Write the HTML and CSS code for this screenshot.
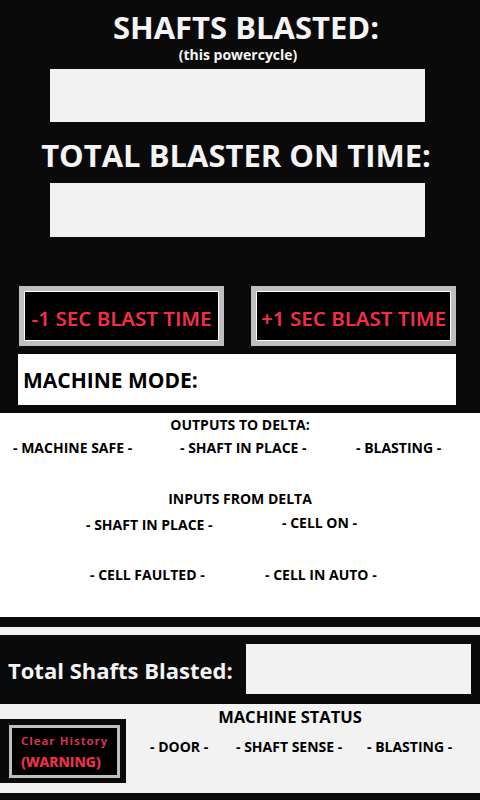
FILE: index.html
```html
<!DOCTYPE html>
<html lang="en">
<head>
    <meta charset="UTF-8">
    <meta name="viewport" content="width=device-width, initial-scale=1.0">
    <title>Blaster HMI</title>
    <link rel="stylesheet" href="styles.css">
</head>
<body>

    <div class="top">
        <h1 class="title">SHAFTS BLASTED:</h1>
        <div class="sub">(this powercycle)</div>
        <div class="readout"></div>

        <h1 class="title title-2">TOTAL BLASTER ON TIME:</h1>
        <div class="readout readout-2"></div>

        <div class="buttons">
            <button class="blast-btn">-1 SEC BLAST TIME</button>
            <button class="blast-btn">+1 SEC BLAST TIME</button>
        </div>

        <div class="mode">MACHINE MODE:</div>
    </div>

    <div class="io">
        <div class="io-head">OUTPUTS TO DELTA:</div>
        <div class="io-row outputs">
            <span>- MACHINE SAFE -</span>
            <span>- SHAFT IN PLACE -</span>
            <span>- BLASTING -</span>
        </div>

        <div class="io-head inputs-head">INPUTS FROM DELTA</div>
        <div class="io-row inputs-1">
            <span>- SHAFT IN PLACE -</span>
            <span class="cell-on">- CELL ON -</span>
        </div>
        <div class="io-row inputs-2">
            <span>- CELL FAULTED -</span>
            <span>- CELL IN AUTO -</span>
        </div>
    </div>

    <div class="divider"></div>

    <div class="total">
        <span class="total-label">Total Shafts Blasted:</span>
        <div class="total-box"></div>
    </div>

    <div class="bottom">
        <div class="clear-wrap">
            <button class="clear-btn">
                <span class="clear-line">Clear History</span>
                <span class="warn-line">(WARNING)</span>
            </button>
        </div>
        <div class="status">
            <div class="status-head">MACHINE STATUS</div>
            <div class="status-row">
                <span>- DOOR -</span>
                <span>- SHAFT SENSE -</span>
                <span>- BLASTING -</span>
            </div>
        </div>
    </div>

</body>
</html>
```

FILE: styles.css
```css
body {
    margin: 0;
    width: 480px;
    height: 800px;
    overflow: hidden;
    background-color: #0a0a0a;
    font-family: "Open Sans", "DejaVu Sans", sans-serif;
    font-weight: bold;
}
.top {
    height: 401px;
    padding-top: 12px;
}
.title {
    margin: 0;
    font-size: 31px;
    line-height: 30px;
    text-align: center;
    color: #f4f4f4;
    padding-left: 12px;
}
.title-2 {
    font-size: 31px;
    line-height: 31px;
    margin-top: 18px;
    padding: 0 8px 0 0;
}
.sub {
    margin-top: 6px;
    padding-right: 4px;
    font-size: 14px;
    line-height: 14px;
    text-align: center;
    color: #f4f4f4;
}
.readout {
    width: 375px;
    height: 53px;
    margin: 7px 0 0 50px;
    background-color: #f2f2f2;
}
.readout-2 {
    height: 54px;
    margin-top: 12px;
}
.buttons {
    display: flex;
    gap: 27px;
    margin: 49px 0 0 19px;
}
.blast-btn {
    width: 205px;
    height: 60px;
    padding: 4px 0 0;
    border: 5px solid #bfbfbf;
    box-shadow: inset 0 0 0 1px #ffffff;
    background-color: #000;
    color: #ff2a2a;
    font-family: inherit;
    font-weight: 600;
    font-size: 20px;
    letter-spacing: 0.3px;
    text-shadow: 1px 0 rgba(60, 90, 255, 0.45);
    cursor: pointer;
}
.mode {
    width: 433px;
    height: 51px;
    margin: 8px 0 0 18px;
    padding-left: 5px;
    display: flex;
    align-items: center;
    background-color: #fff;
    color: #000;
    font-size: 21px;
}
.io {
    height: 200px;
    padding-top: 4px;
    background-color: #fff;
    color: #000;
    font-size: 14px;
    line-height: 16px;
}
.io-head {
    text-align: center;
}
.io-row {
    display: grid;
}
.outputs {
    margin-top: 7px;
    padding-left: 13px;
    grid-template-columns: 167px 176px auto;
}
.inputs-head {
    margin-top: 35px;
}
.inputs-1 {
    margin-top: 10px;
    padding-left: 86px;
    grid-template-columns: 196px auto;
}
.cell-on {
    margin-top: -2px;
}
.inputs-2 {
    margin-top: 34px;
    padding-left: 90px;
    grid-template-columns: 175px auto;
}
.divider {
    height: 8px;
    margin-top: 10px;
    background-color: #f2f2f2;
}
.total {
    height: 69px;
    display: flex;
    align-items: center;
    justify-content: space-between;
    padding: 0 9px 0 8px;
}
.total-label {
    color: #f4f4f4;
    font-size: 22px;
    letter-spacing: 0;
}
.total-box {
    width: 225px;
    height: 50px;
    margin-top: -1px;
    background-color: #f2f2f2;
}
.bottom {
    height: 89px;
    display: flex;
    background-color: #f2f2f2;
}
.clear-wrap {
    margin-top: 15px;
    padding: 6px 6px 5px 9px;
    background-color: #0a0a0a;
    box-sizing: border-box;
    width: 126px;
    height: 64px;
}
.clear-btn {
    width: 100%;
    height: 100%;
    padding: 0 0 0 9px;
    border: 3px solid #bfbfbf;
    background-color: #000;
    color: #ff2a2a;
    font-family: inherit;
    text-align: left;
    display: flex;
    flex-direction: column;
    justify-content: center;
    gap: 4px;
    text-shadow: 1px 0 rgba(60, 90, 255, 0.45);
    cursor: pointer;
}
.clear-line {
    font-size: 11px;
    font-weight: 600;
    letter-spacing: 1.4px;
}
.warn-line {
    font-size: 14px;
    font-weight: bold;
    letter-spacing: 0;
}
.status {
    width: 328px;
    padding-top: 4px;
    color: #000;
}
.status-head {
    text-align: center;
    font-size: 16.5px;
    line-height: 17px;
}
.status-row {
    display: grid;
    grid-template-columns: 86px 131px auto;
    margin-top: 14px;
    padding-left: 24px;
    font-size: 14px;
    line-height: 16px;
}
```
